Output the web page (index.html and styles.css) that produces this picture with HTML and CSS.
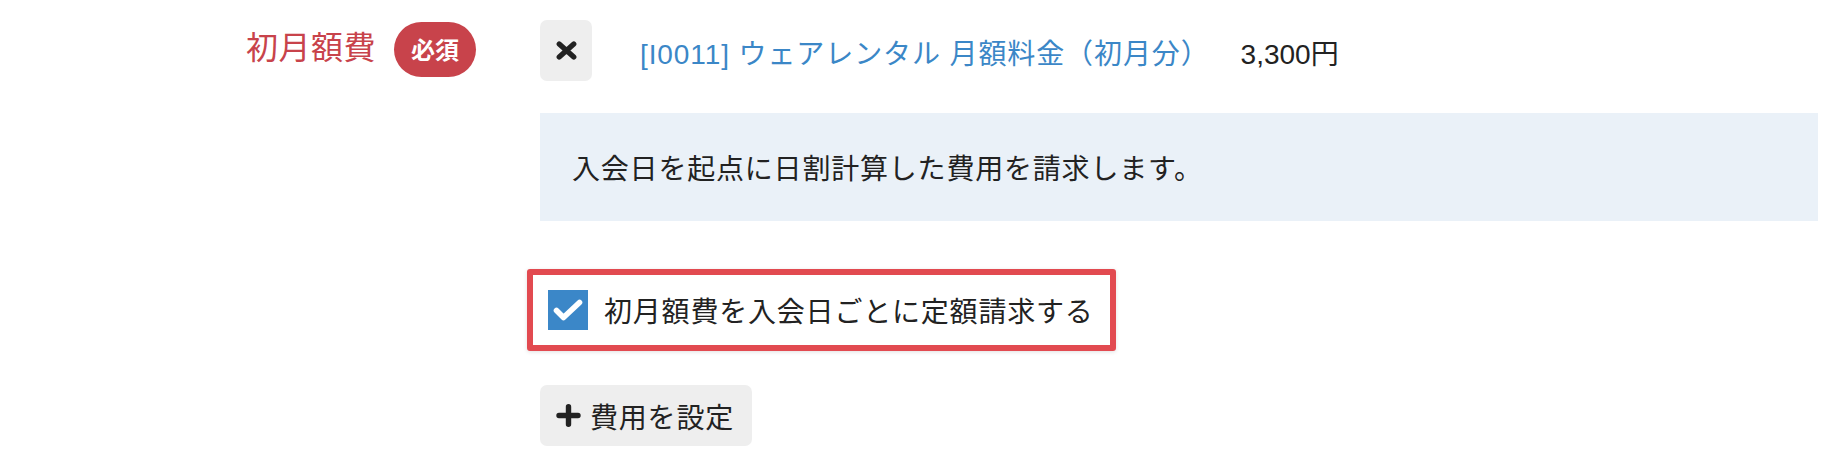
FILE: index.html
```html
<!DOCTYPE html>
<html lang="ja">
<head>
<meta charset="utf-8">
<link rel="stylesheet" href="styles.css">
</head>
<body>
<div class="form-row">
  <div class="label-cell">
    <span class="label-text">初月額費</span>
    <span class="badge">必須</span>
  </div>
  <div class="content-cell">
    <div class="item-row">
      <button class="remove-btn" type="button" aria-label="削除">
        <svg width="21" height="19" viewBox="0 0 21 19"><path d="M3.2 3 L17.8 16 M17.8 3 L3.2 16" stroke="#222" stroke-width="5.2" stroke-linecap="round" fill="none"/></svg>
      </button>
      <a class="item-link" href="#">[I0011] ウェアレンタル 月額料金（初月分）</a>
      <span class="price">3,300円</span>
    </div>
    <div class="info-box">入会日を起点に日割計算した費用を請求します。</div>
    <div class="check-wrap">
      <label class="check-row">
        <span class="checkbox">
          <svg width="32" height="24" viewBox="0 0 32 24"><path d="M4.5 12.5 L11.5 19.5 L27.5 4.5" stroke="#fff" stroke-width="5.6" stroke-linecap="round" stroke-linejoin="round" fill="none"/></svg>
        </span>
        <span class="check-text">初月額費を入会日ごとに定額請求する</span>
      </label>
    </div>
    <button class="add-btn" type="button">
      <svg width="25" height="23" viewBox="0 0 25 23"><path d="M12.5 2.8 V20.2 M3 11.5 H22" stroke="#222" stroke-width="5.4" stroke-linecap="round" fill="none"/></svg>
      <span>費用を設定</span>
    </button>
  </div>
</div>
</body>
</html>
```

FILE: styles.css
```css
* { box-sizing: border-box; }
html, body { margin: 0; padding: 0; background: #fff; }
body {
  font-family: "Liberation Sans", "Noto Sans CJK JP", sans-serif;
  color: #222;
  width: 1842px;
  height: 472px;
  overflow: hidden;
}
.form-row {
  display: grid;
  grid-template-columns: 540px 1278px;
  padding-top: 20px;
}
.label-cell {
  display: flex;
  justify-content: flex-end;
  align-items: center;
  align-self: start;
  height: 56px;
  padding-right: 64px;
}
.label-text {
  font-family: "Noto Sans CJK JP", sans-serif;
  font-size: 32px;
  color: #c8434b;
  letter-spacing: 0.5px;
  line-height: 1;
  margin-top: -6px;
}
.badge {
  margin-left: 18px;
  display: inline-flex;
  align-items: center;
  justify-content: center;
  width: 82px;
  height: 55px;
  border-radius: 28px;
  background: #c8434b;
  color: #fff;
  font-family: "Noto Sans CJK JP", sans-serif;
  font-weight: 700;
  font-size: 24px;
  line-height: 1;
  margin-top: 2px;
}
.content-cell {
  display: flex;
  flex-direction: column;
  align-items: flex-start;
}
.item-row {
  display: flex;
  align-items: center;
  height: 61px;
}
.remove-btn {
  width: 52px;
  height: 61px;
  border: none;
  border-radius: 7px;
  background: #eeeeee;
  display: flex;
  align-items: center;
  justify-content: center;
  padding: 0;
  margin-right: 48px;
}
.item-link {
  font-size: 28px;
  color: #3b87c7;
  text-decoration: none;
  letter-spacing: 0.9px;
  margin-top: 2px;
}
.price {
  font-size: 28px;
  color: #222;
  margin-left: 31px;
  margin-top: 2px;
}
.info-box {
  margin-top: 32px;
  width: 1278px;
  height: 108px;
  background: #eaf1f8;
  display: flex;
  align-items: center;
  padding: 0 32px;
  font-family: "Noto Sans CJK JP", sans-serif;
  font-size: 28px;
  letter-spacing: 0.8px;
  color: #222;
}
.check-wrap {
  margin-top: 48px;
  margin-left: -13px;
  border: 6px solid #e24a50;
  border-radius: 3px;
  box-shadow: 0 1px 4px rgba(0, 0, 0, 0.12);
  padding: 15px 16px 15px 15px;
}
.check-row {
  display: flex;
  align-items: center;
  height: 40px;
}
.checkbox {
  width: 40px;
  height: 40px;
  background: #3b87c8;
  display: flex;
  align-items: center;
  justify-content: center;
  margin-right: 16px;
}
.check-text {
  font-family: "Noto Sans CJK JP", sans-serif;
  font-size: 28px;
  letter-spacing: 0.8px;
  color: #222;
  line-height: 1;
}
.add-btn {
  margin-top: 34px;
  height: 61px;
  border: none;
  border-radius: 7px;
  background: #eeeeee;
  display: flex;
  align-items: center;
  padding: 0 18px 0 16px;
  font-family: "Noto Sans CJK JP", sans-serif;
  font-size: 28px;
  letter-spacing: 0.8px;
  color: #222;
}
.add-btn svg { margin-right: 9px; }
```
